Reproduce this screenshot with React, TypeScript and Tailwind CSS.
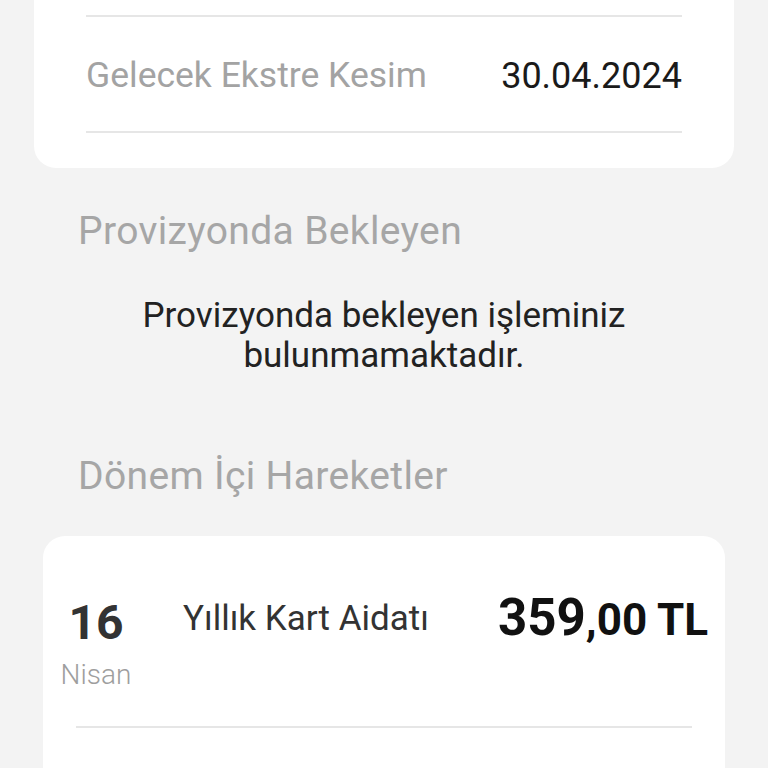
export default function App() {
  return (
    <div className="min-h-[768px] w-[768px] overflow-hidden bg-[#f3f3f3]" style={{ fontFamily: "Roboto, 'Noto Sans', sans-serif" }}>
      <div className="mx-[34px] -mt-[40px] rounded-[22px] bg-white px-[52px] pt-[55px] pb-[35px]">
        <div className="h-[2px] bg-[#e6e6e6]" />
        <div className="flex h-[114px] items-center justify-between pt-[3px]">
          <span className="text-[35.5px] text-[#a3a3a3]">Gelecek Ekstre Kesim</span>
          <span className="text-[36px] text-[#1a1a1a]">30.04.2024</span>
        </div>
        <div className="h-[2px] bg-[#e6e6e6]" />
      </div>
      <div className="px-[78px] pt-[40px] text-[39px] leading-[46px] tracking-[0.35px] text-[#a6a6a6]">Provizyonda Bekleyen</div>
      <div className="pt-[42px] text-center text-[35px] leading-[40px] text-[#222]">
        Provizyonda bekleyen işleminiz
        <br />
        bulunmamaktadır.
      </div>
      <div className="px-[78px] pt-[77px] text-[39px] leading-[46px] tracking-[0.35px] text-[#a6a6a6]">Dönem İçi Hareketler</div>
      <div className="mx-[43px] mt-[37px] rounded-t-[22px] bg-white pt-[62px]">
        <div className="flex items-start pr-[17px]">
          <div className="flex w-[106px] flex-col items-center">
            <span className="text-[48px] font-bold leading-[50px] text-[#333]">16</span>
            <span className="mt-[10px] text-[28px] font-light leading-[34px] text-[#9e9e9e]">Nisan</span>
          </div>
          <span className="ml-[34px] mt-[1px] text-[35px] leading-[40px] text-[#333]">Yıllık Kart Aidatı</span>
          <span className="ml-auto -mt-[5px] flex items-baseline font-bold leading-[50px] text-[#111]">
            <span className="text-[51px]">359</span>
            <span className="text-[44px]">,00 TL</span>
          </span>
        </div>
        <div className="mx-[33px] mt-[34px] h-[2px] bg-[#e6e6e6]" />
        <div className="h-[60px]" />
      </div>
    </div>
  );
}
